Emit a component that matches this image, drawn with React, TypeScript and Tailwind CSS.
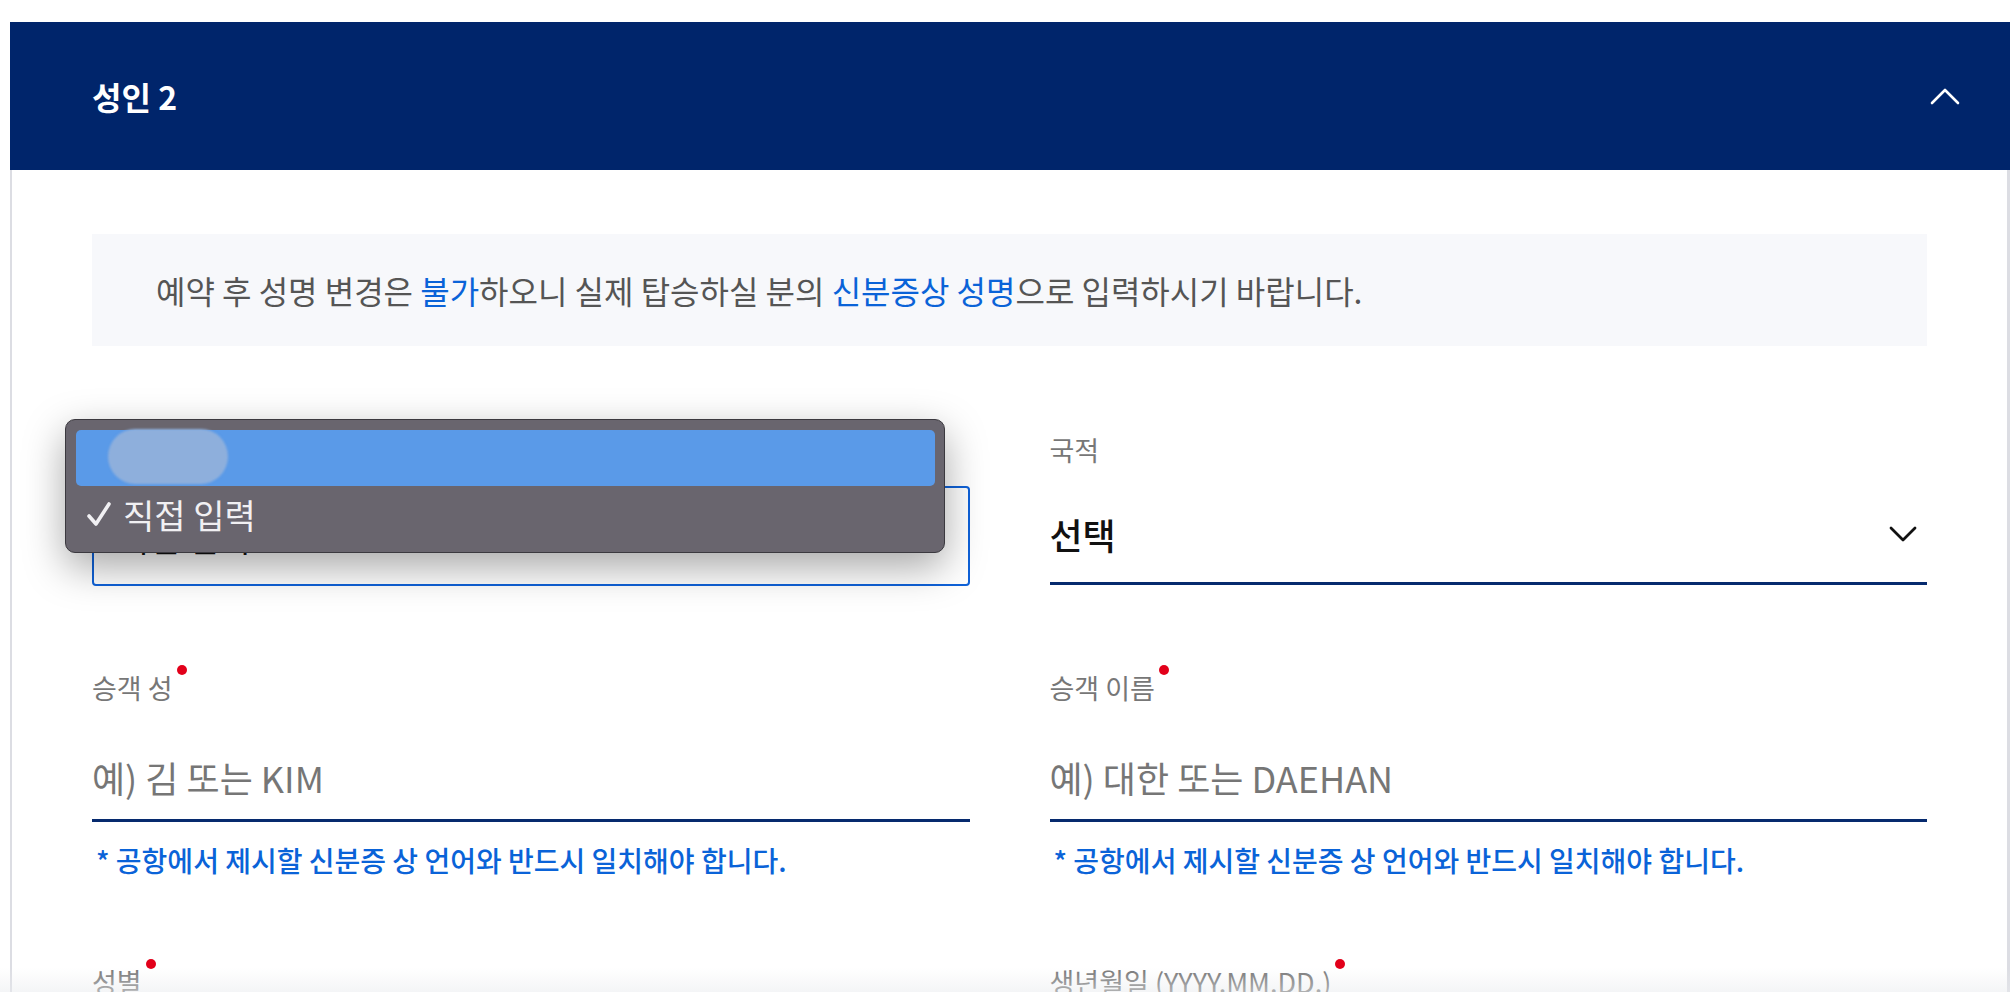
import React from "react";

function ChevronUp() {
  return (
    <svg width="30" height="18" viewBox="0 0 30 18" fill="none">
      <path d="M2 16 L15 3 L28 16" stroke="white" strokeWidth="2.6" strokeLinecap="round" strokeLinejoin="round" />
    </svg>
  );
}

function ChevronDown() {
  return (
    <svg width="28" height="16" viewBox="0 0 28 16" fill="none">
      <path d="M2 2 L14 14 L26 2" stroke="#111" strokeWidth="2.8" strokeLinecap="round" strokeLinejoin="round" />
    </svg>
  );
}

function Label({ text, required }: { text: string; required?: boolean }) {
  return (
    <div className="h-[36px] text-[27px] leading-[36px] text-[#777]">
      <span className="relative">
        {text}
        {required && (
          <span className="absolute -right-[14px] -top-[3px] h-[10px] w-[10px] rounded-full bg-[#e2001a]" />
        )}
      </span>
    </div>
  );
}

function NameField({ label, placeholder }: { label: string; placeholder: string }) {
  return (
    <div>
      <Label text={label} required />
      <div className="mt-[22px] flex h-[94px] items-center border-b-[3px] border-[#062a6e] pt-[6px] text-[36px] text-[#767676]">
        {placeholder}
      </div>
      <p className="mt-[20px] pl-[4px] text-[28px] leading-[36px] font-medium text-[#0a63d8]">
        * 공항에서 제시할 신분증 상 언어와 반드시 일치해야 합니다.
      </p>
    </div>
  );
}

export default function App() {
  return (
    <div className="relative h-[992px] overflow-hidden bg-white pl-[10px] pt-[22px] font-['Noto_Sans_CJK_KR','Noto_Sans',sans-serif]">
      <section>
        {/* Header */}
        <div className="flex h-[148px] items-center justify-between bg-[#00256b] pl-[82px] pr-[50px]">
          <h2 className="text-[32px] font-bold text-white">성인 2</h2>
          <ChevronUp />
        </div>

        {/* Body */}
        <div className="border-l-2 border-r-[3px] border-[#dcdde3] px-[80px] pt-[64px] pb-[80px]">
          <div className="flex h-[112px] items-center bg-[#f7f8fb] pl-[64px] text-[32px] text-[#555]">
            <p>
              예약 후 성명 변경은 <span className="text-[#0a63d8]">불가</span>하오니 실제 탑승하실 분의{" "}
              <span className="text-[#0a63d8]">신분증상 성명</span>으로 입력하시기 바랍니다.
            </p>
          </div>

          {/* Row 1 */}
          <div className="mt-[86px] grid grid-cols-2 gap-x-[80px]">
            <div>
              <div className="h-[36px]" />
              <div className="mt-[18px] flex h-[100px] items-center rounded-[4px] border-2 border-[#0f62d9] pl-[24px] pt-[2px] text-[34px] text-[#111]">
                직접 입력
              </div>
            </div>
            <div>
              <Label text="국적" />
              <div className="mt-[18px] flex h-[99px] items-center justify-between border-b-[3px] border-[#062a6e] pr-[10px]">
                <span className="text-[36px] font-medium text-[#111]">선택</span>
                <ChevronDown />
              </div>
            </div>
          </div>

          {/* Row 2 */}
          <div className="mt-[84px] grid grid-cols-2 gap-x-[80px]">
            <NameField label="승객 성" placeholder="예) 김 또는 KIM" />
            <NameField label="승객 이름" placeholder="예) 대한 또는 DAEHAN" />
          </div>

          {/* Row 3 */}
          <div className="mt-[86px] grid grid-cols-2 gap-x-[80px]">
            <Label text="성별" required />
            <Label text="생년월일 (YYYY.MM.DD.)" required />
          </div>
        </div>
      </section>

      {/* Native select popup */}
      <div className="absolute left-[65px] top-[419px] h-[134px] w-[880px] rounded-[10px] border border-[#3b393f] bg-[#69656e] shadow-[0_14px_40px_rgba(0,0,0,0.35)]">
        <div className="absolute left-[10px] top-[10px] h-[56px] w-[859px] rounded-[5px] bg-[#5a9ae8]" />
        <div className="absolute left-[42px] top-[9px] h-[55px] w-[120px] rounded-full bg-[#8eafdc] blur-[1px]" />
        <div className="absolute left-[20px] top-[74px] flex h-[40px] items-center gap-[11px] text-[34px] text-[#f1f0f3]">
          <svg width="26" height="26" viewBox="0 0 26 26" fill="none">
            <path d="M3 15 L10 23 L23 3" stroke="#f1f0f3" strokeWidth="3.6" strokeLinecap="round" strokeLinejoin="round" />
          </svg>
          <span>직접 입력</span>
        </div>
      </div>

      {/* bottom fade */}
      <div className="absolute bottom-0 left-0 right-0 h-[24px] bg-linear-to-b from-white/0 to-[#e9ebee]/50" />
    </div>
  );
}
